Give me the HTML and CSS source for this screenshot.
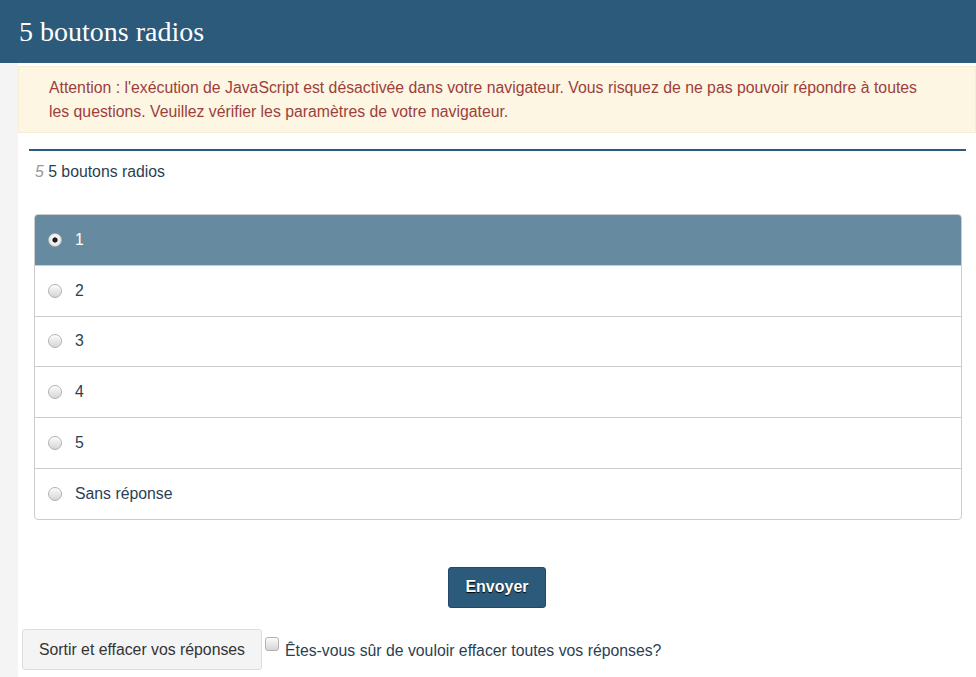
FILE: index.html
```html
<!DOCTYPE html>
<html lang="fr">
<head>
  <meta charset="UTF-8">
  <title>5 boutons radios</title>
  <link rel="stylesheet" href="styles.css">
</head>
<body>
  <div class="page-header">
    <h1>5 boutons radios</h1>
  </div>
  <div class="layout">
    <div class="sidebar"></div>
    <div class="main">
      <div class="alert">
        Attention : l'exécution de JavaScript est désactivée dans votre navigateur. Vous risquez de ne pas pouvoir répondre à toutes les questions. Veuillez vérifier les paramètres de votre navigateur.
      </div>

      <div class="question">
        <div class="question-title"><span class="num">5</span> 5 boutons radios</div>

        <div class="list-group">
          <label class="list-item active"><input type="radio" name="q5" checked> 1</label>
          <label class="list-item"><input type="radio" name="q5"> 2</label>
          <label class="list-item"><input type="radio" name="q5"> 3</label>
          <label class="list-item"><input type="radio" name="q5"> 4</label>
          <label class="list-item"><input type="radio" name="q5"> 5</label>
          <label class="list-item"><input type="radio" name="q5"> Sans réponse</label>
        </div>
      </div>

      <div class="submit-row">
        <button class="btn-primary">Envoyer</button>
      </div>

      <div class="clear-row">
        <button class="btn-default">Sortir et effacer vos réponses</button>
        <label class="confirm"><input type="checkbox"> Êtes-vous sûr de vouloir effacer toutes vos réponses?</label>
      </div>
    </div>
  </div>
</body>
</html>
```

FILE: styles.css
```css
body {
  margin: 0;
  background-color: #fff;
  font-family: "Liberation Sans", Arial, sans-serif;
  font-size: 16px;
  color: #2a3f54;
}
.page-header {
  background-color: #2b5a7a;
  height: 63px;
  padding-left: 19px;
}
.page-header h1 {
  margin: 0;
  font-family: "Liberation Serif", "Times New Roman", serif;
  font-weight: normal;
  font-size: 28px;
  line-height: 63px;
  color: #fff;
}
.layout {
  display: flex;
  min-height: 614px;
}
.sidebar {
  width: 18px;
  background-color: #f4f4f4;
  flex-shrink: 0;
}
.main {
  flex: 1;
}
.alert {
  margin-top: 3px;
  padding: 9px 42px 8px 30px;
  background-color: #fcf6e3;
  border: 1px solid #f6edd5;
  color: #9c3f3d;
  font-size: 15.8px;
  line-height: 24px;
}
.question {
  margin: 16px 10px 0 11px;
  border-top: 2px solid #2b5a7a;
}
.question-title {
  padding: 10px 0 0 6px;
  font-size: 15.8px;
  line-height: 22px;
}
.question-title .num {
  font-style: italic;
  color: #999;
}
.list-group {
  margin: 31px 4px 0 5px;
  border: 1px solid #ccc;
  border-radius: 4px;
  overflow: hidden;
}
.list-item {
  display: flex;
  align-items: center;
  height: 49.8px;
  padding-left: 13px;
  border-top: 1px solid #ccc;
  color: #2a3f54;
  font-size: 15.8px;
}
.list-item:first-child {
  border-top: none;
}
.list-item.active {
  background-color: #668aa0;
  color: #fff;
}
.list-item input {
  margin: 0 13px 0 0;
}
input[type="radio"], input[type="checkbox"] {
  -webkit-appearance: none;
  appearance: none;
  width: 14px;
  height: 14px;
  border: 1px solid #b0b0b0;
  background: linear-gradient(#fafafa, #d6d6d6);
  box-shadow: inset 0 1px 1px #fff;
  flex-shrink: 0;
}
input[type="radio"] {
  border-radius: 50%;
}
input[type="radio"]:checked {
  background: radial-gradient(circle, #1e1e1e 0 2.2px, #f4f4f4 3px, #dadada 100%);
}
input[type="checkbox"] {
  border-radius: 3px;
}
.submit-row {
  text-align: center;
  margin-top: 47px;
}
.btn-primary {
  background-color: #2b5a7a;
  color: #fff;
  font-family: "Liberation Sans", Arial, sans-serif;
  font-weight: bold;
  font-size: 16px;
  border: 1px solid #22496a;
  border-radius: 3px;
  width: 98px;
  height: 41px;
  text-shadow: 0 1px 1px #000;
  cursor: pointer;
}
.clear-row {
  display: flex;
  align-items: flex-start;
  margin: 21px 0 0 4px;
}
.btn-default {
  background-color: #f4f4f4;
  color: #333;
  font-family: "Liberation Sans", Arial, sans-serif;
  font-size: 15.8px;
  border: 1px solid #ddd;
  border-radius: 3px;
  width: 240px;
  height: 41px;
  padding-top: 3px;
  cursor: pointer;
}
.confirm {
  display: flex;
  align-items: flex-start;
  margin-left: 3px;
  padding-top: 8px;
  font-size: 15.8px;
  line-height: 28px;
}
.confirm input {
  margin: 0 6px 0 0;
}
```
